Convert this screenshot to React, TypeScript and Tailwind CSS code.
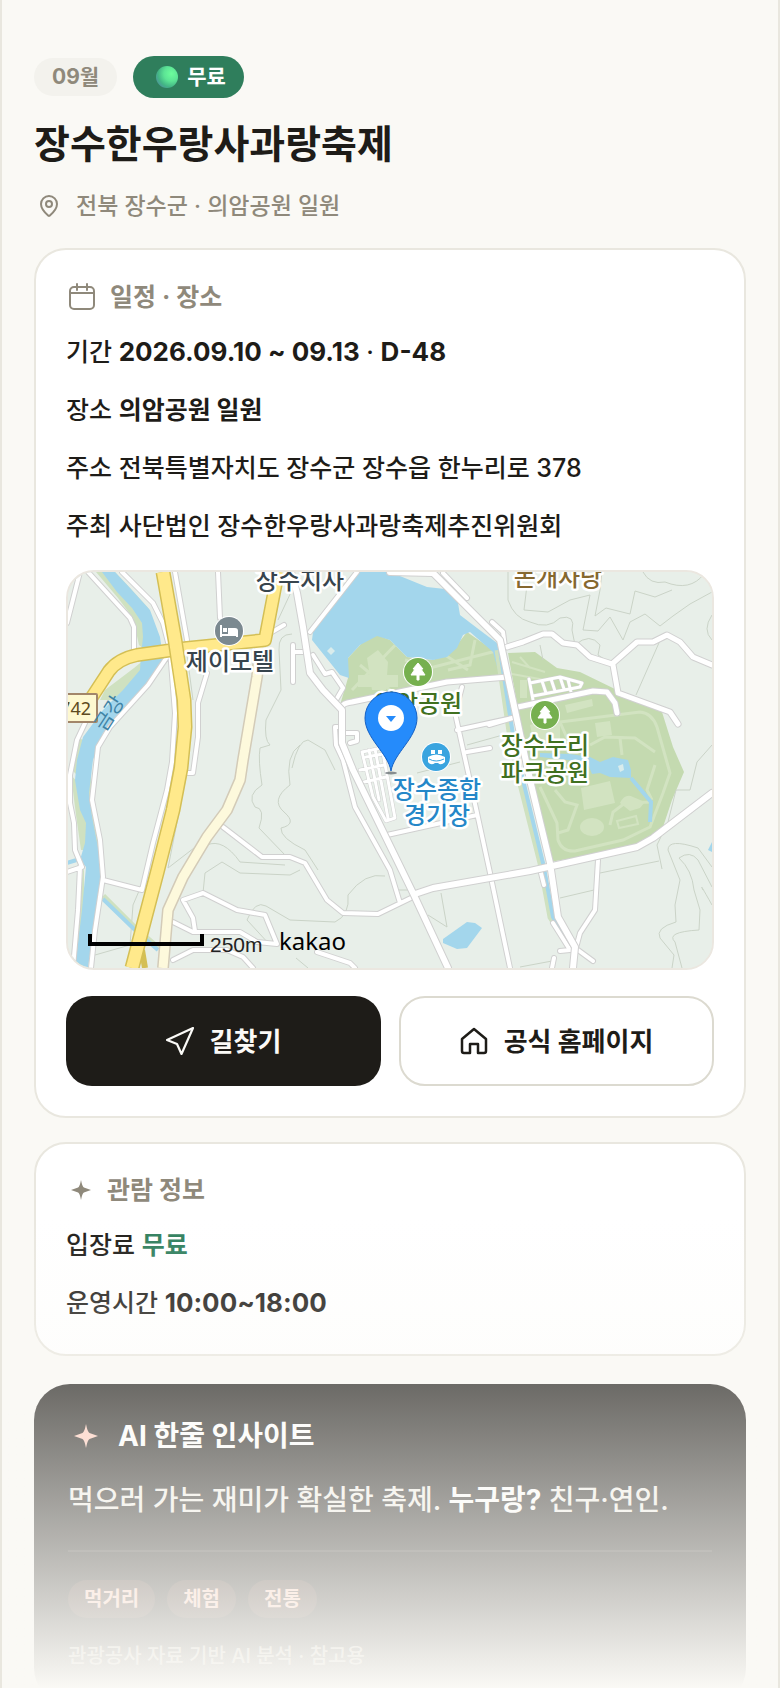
import type { ReactNode } from "react";
import { MapPin } from "lucide-react";

const details = [
  { label: "주소", value: "전북특별자치도 장수군 장수읍 한누리로 378" },
  { label: "주최", value: "사단법인 장수한우랑사과랑축제추진위원회" },
];

const tags = ["먹거리", "체험", "전통"];

// roads are drawn twice: a grey casing first, then the white fill
const smallRoads = [
  "M88 572 L130 618 L134 627 V649",
  "M122 572 L153 603 L163 623 L170 650 L175 713 L172 762 L167 790 L153 843 L142 890 L103 880",
  "M167 657 L148 685 L110 727 L98 747 L92 800 L100 840 L103 877 L95 930 L91 968",
  "M80 572 L67 623",
  "M85 723 L77 740 L70 775 L70 803 L74 823 L75 850 L82 867 L67 872",
  "M80 867 L78 910 L73 968",
  "M175 572 L187 640",
  "M218 572 L220 618",
  "M207 673 L198 703 V737 L193 773 H188",
  "M272 632 L284 625",
  "M293 645 V682",
  "M293 652 H303",
  "M223 827 L262 857 L290 857 L305 863 L327 900 L343 913 L378 914 L415 896",
  "M173 922 L193 932 H240 L257 942 L277 944 L265 915 L237 910 L203 893 L183 900 L193 918 L195 931",
  "M173 960 L193 950 H227 L243 957 L253 968",
  "M317 952 L350 963 L355 968",
  "M357 572 L310 632",
  "M313 655 L325 674 L332 672 L343 688 L336 700",
  "M342 727 L335 727 L336 745 L343 760 L355 807 L390 870 L400 903",
  "M462 687 L455 713 L477 813 L490 873 L510 968",
  "M457 730 L512 718",
  "M467 752 L490 748",
  "M387 835 L477 815",
  "M346 733 H357 V741 L350 743",
  "M443 573 L467 598",
  "M492 622 L503 632 L505 647",
  "M598 860 L595 910 L580 933 L576 948",
  "M578 950 L593 961",
  "M553 923 L570 950 L560 951",
  "M554 958 L552 968",
  "M541 873 L544 885",
  "M489 725 L513 718",
];

const midRoads = [
  "M507 647 L523 642 L543 634 H552 L563 643 L577 645 L590 657 L612 664 L637 642 H653 L667 635 L680 642 L693 657 L712 665",
  "M613 665 L618 693 L670 712 L678 724",
  "M518 707 L593 691 L607 692 L615 703 L617 713",
  "M342 707 Q343 703 352 702 L447 682 L508 677",
];

const bigRoads = [
  "M291 572 L297 593 L303 627 L310 673 L323 690 L342 710 V743 L353 770 L413 893 L448 968",
  "M415 894 L433 888 L530 871 L637 847 L653 838 L712 793",
  "M390 572 L433 573 L470 610 L500 640 L507 673 L530 780 L550 863 L558 917 L575 947 L573 968",
];

const lots = [
  "M362 752 L382 748 L395 818 L386 821 L373 797 Z",
  "M369 750 L379 800 M375 749 L388 818 M360 770 L384 765 M364 782 L386 777 M366 757 L383 754",
  "M529 679 L533 700 M530 683 L560 677 L582 683 L580 687 L533 696 M542 681 L546 693 M551 679 L555 691 M560 677 L564 689 M568 680 L571 692",
];

const contours = [
  "M508 572 L508 600 Q514 618 530 622 Q548 630 560 618 Q576 614 572 630 L575 645 Q590 632 600 645 L598 655 L610 663",
  "M527 585 L524 610 L548 612 L570 600 L590 595 L583 630 L598 631 L610 617 L623 640 L630 622 L645 614 L660 626 L673 616 L690 604 L712 592",
  "M643 572 Q650 585 665 582 Q690 592 704 574",
  "M602 572 L600 590 L595 616 L606 608 L630 614 L635 591 L655 597 L672 590",
  "M662 636 L636 695 M540 645 L543 660 M712 615 Q702 630 712 640",
  "M712 745 L697 762 L690 790 L676 790 L668 822 L657 845 L662 869 M600 873 L659 861",
  "M560 898 L594 890 M520 967 L552 961",
  "M712 867 L698 848 Q668 838 668 850 L680 880 L675 905 L676 922 Q655 928 660 938 L674 955 L672 968",
  "M712 905 Q698 880 703 890 M712 887 L698 860 Q690 850 679 858 Q692 870 694 890 L700 910 L699 930 Q665 932 675 942 L682 968",
  "M292 634 Q278 634 279 650 L281 690 L266 720 Q264 740 270 745 L260 748 Q258 760 262 785 Q246 795 255 807 Q266 808 259 828 L285 855",
  "M300 745 Q285 755 290 785 Q270 800 284 812 Q298 824 281 828 Q280 838 305 850 L318 870",
  "M292 590 L278 620 M185 640 L193 700 M187 772 L168 868 L207 838",
  "M207 845 Q223 838 240 862 L285 865 M203 893 L205 873 L222 862 L240 873 L290 875 L300 870",
  "M270 945 L247 920 Q255 900 266 906 L290 920 L335 922 Q350 915 348 895 Q365 872 385 876",
  "M398 890 L410 890 M441 893 L447 927 L428 915",
  "M292 768 Q298 740 308 740 L325 750 L335 770 M417 773 L460 762 M467 745 L510 733",
  "M139 891 L133 905 L130 945 L95 955 M296 958 L308 968",
];

const parkPaths = [
  "M540 787 L557 823 L558 840 Q562 852 575 851 L623 840 L650 827 L663 793 L670 773 L657 727 Q652 713 640 712 L560 722",
  "M555 790 L565 802 L577 805 L568 830 L558 833 M610 825 L613 812 L625 803 L652 802 M655 765 L647 790 L652 800",
  "M590 745 L605 737 L635 738 L655 752 M620 738 L622 755 M560 722 L570 745",
  "M352 690 L400 640 M375 660 V690 M360 665 L390 690 M405 660 L430 668 L500 650 M475 640 L470 665 L448 670 M445 655 L468 670",
];

const font = "font-['Inter','Noto_Sans_CJK_KR',sans-serif]";

function Tree({ x, y }: { x: number; y: number }) {
  return (
    <g transform={`translate(${x} ${y})`}>
      <circle r="15" fill="#fff" />
      <circle r="14" fill="#76b04f" />
      <path d="M0 -9 L5 -3 H3 L7 3 H1 V8 H-1 V3 H-7 L-3 -3 H-5 Z" fill="#fff" stroke="#fff" strokeLinejoin="round" />
    </g>
  );
}

function Roads({ paths, casing, fill }: { paths: string[]; casing: number; fill: number }) {
  const d = paths.join(" ");
  return (
    <g fill="none" strokeLinejoin="round" strokeLinecap="round">
      <path d={d} stroke="#d0d0d0" strokeWidth={casing} />
      <path d={d} stroke="#fff" strokeWidth={fill} />
    </g>
  );
}

function FestivalMap() {
  return (
    <div className="h-[400px] overflow-hidden rounded-[28px] border-2 border-[#ebe7e0] bg-[#e8efe9]">
      <svg
        viewBox="68 572 644 396"
        preserveAspectRatio="xMidYMid slice"
        className="block h-full w-full"
        role="img"
        aria-label="의암공원 지도"
      >
        <rect x="68" y="572" width="644" height="396" fill="#e8efe9" />

        {/* parks */}
        <g fill="#c4dab0">
          <path d="M340 705 L348 678 L348 658 L362 643 L377 635 L390 640 L407 657 L433 660 L453 650 L467 632 L493 650 L503 677 L447 683 Z" />
          <path d="M508 653 L535 652 L557 668 L580 672 L617 690 L662 712 L673 747 L684 772 L672 800 L663 827 L637 847 L550 862 L523 737 Z" />
        </g>
        <path d="M96 572 L118 598 L133 618 L139 645 L145 650 L152 572 Z M150 655 L134 668 L105 690 L100 700 L125 700 Z M72 770 L77 738 L84 740 L82 780 Z M71 775 L76 815 L81 850 L88 850 L90 822 L80 785 Z M84 865 L78 905 L72 968 H84 Z M90 770 L103 870 L95 870 L88 790 Z" fill="#cfe1c0" />
        <path d="M115 572 L152 572 L170 650 L163 657 L160 637 L150 610 L130 588 Z" fill="#e8efe9" />
        <g fill="none" stroke="#d2e3c1" strokeWidth="3">
          {parkPaths.map((d) => (
            <path key={d} d={d} />
          ))}
        </g>
        <g fill="#d2e3c1">
          <path d="M581 788 L610 781 L615 803 L584 810 Z M367 658 L378 650 L388 662 L386 690 H372 Z M358 675 H398 V687 H358 Z M520 680 H527 V698 H520 Z M595 723 L610 721 L612 735 L597 737 Z M565 705 L592 699 L593 706 L567 713 Z M530 725 L560 715 V745 L535 748 Z" />
          <ellipse cx="592" cy="827" rx="12" ry="9" />
          <path d="M620 803 Q625 793 633 797 L645 802 L640 808 L630 811 Z" />
        </g>
        <path d="M617 821 L636 816 L638 824 L619 828 Z M512 662 L545 672 M512 674 L545 680 M520 657 L530 668" fill="none" stroke="#d2e3c1" strokeWidth="2" />

        <g fill="none" stroke="#cad3c7" strokeWidth="1">
          {contours.map((d) => (
            <path key={d} d={d} />
          ))}
        </g>

        {/* water */}
        <g fill="#a3d6ec">
          <path d="M102 572 L117 592 L132 608 L142 623 L143 637 L141 655 L140 670 L123 690 L103 710 L83 737 L77 760 L75 780 L80 810 L86 823 L85 843 L80 860 L86 867 L82 910 L75 968 H88 L93 933 L99 907 L101 880 L99 853 L92 817 L89 793 L93 760 L103 733 L140 692 L160 667 L163 657 L160 637 L150 610 L130 588 L115 572 Z" />
          <path d="M357 572 H390 L427 587 L445 589 L458 603 L460 615 L477 628 L497 643 L505 677 L500 677 L493 652 L470 632 L463 635 L457 648 L447 657 L433 660 L407 657 L390 640 L377 636 L360 645 L348 658 L349 678 L340 675 L312 640 L313 632 Z" />
          <path d="M467 922 L475 923 L482 928 L467 948 L457 949 L443 943 V939 Z" />
          <path d="M540 753 L570 754 L590 757 L600 762 L613 757 L628 760 L631 770 L631 778 L610 777 L600 773 L592 774 L587 762 L540 757 Z" />
          <path d="M712 842 L708 850 L712 852 Z" />
        </g>
        <path d="M331 647 L335 651 L331 655 L327 651 Z M618 766 L623 764 L624 770 L620 772 Z" fill="#d9ecec" />
        <g fill="none">
          <path d="M103 896 L135 928 L158 948" stroke="#cfe1c0" strokeWidth="6" />
          <path d="M498 650 L504 690 L512 745 L520 780 L541 863 L551 917 L570 947" stroke="#cfe1c0" strokeWidth="7" />
          <path d="M103 899 L135 930 L158 950 M67 863 L80 859 M631 778 L651 802 L650 822 M500 650 L506 690 L515 747 L523 780 L543 863 L553 917 L572 947" stroke="#a3d6ec" strokeWidth="4" />
        </g>

        <Roads paths={smallRoads} casing={6} fill={4} />
        <Roads paths={lots} casing={4} fill={3} />
        <Roads paths={midRoads} casing={7} fill={5} />
        <Roads paths={bigRoads} casing={8} fill={6} />

        {/* highways */}
        <g fill="none" strokeLinejoin="round">
          <path d="M260 647 L257 677 L243 760 L240 780 L227 810 L207 837 L183 877 L168 910 L163 968" stroke="#d3cbb8" strokeWidth="12" />
          <path d="M260 647 L257 677 L243 760 L240 780 L227 810 L207 837 L183 877 L168 910 L163 968" stroke="#fdf9dc" strokeWidth="9" />
          <path d="M278 572 L265 640 L187 648 L137 655 Q118 659 109 671 L92 697 L80 712" stroke="#d4bf55" strokeWidth="14" />
          <path d="M278 572 L265 640 L187 648 L137 655 Q118 659 109 671 L92 697 L80 712" stroke="#ffe98b" strokeWidth="11" />
          <path d="M142 950 L145 968" stroke="#d4bf55" strokeWidth="6" />
          <path d="M163 572 L175 640 L184 700 L185 727 L181 768 L173 810 L157 873 L142 930 L132 968" stroke="#d4bf55" strokeWidth="15" />
          <path d="M163 572 L175 640 L184 700 L185 727 L181 768 L173 810 L157 873 L142 930 L132 968" stroke="#ffe98b" strokeWidth="12" />
        </g>

        <rect x="50" y="694" width="47" height="28" rx="1" fill="#fdf8d0" stroke="#a2866a" strokeWidth="2" />
        <text x="91" y="715" textAnchor="end" fontSize="18" fill="#5c4a20" className="font-['Noto_Sans',sans-serif]">742</text>

        {/* place labels */}
        <g
          textAnchor="middle"
          fontSize="24"
          stroke="#fff"
          strokeWidth="5"
          strokeLinejoin="round"
          paintOrder="stroke"
          className="font-['Noto_Sans_CJK_KR',sans-serif] font-medium"
        >
          <text x="300" y="589" fill="#37444d">장수지사</text>
          <text x="230" y="670" fill="#37444d">제이모텔</text>
          <text x="558" y="586" fill="#86682f">논개사당</text>
          <text x="418" y="712" fill="#40701f">의암공원</text>
          <text x="545" y="754" fill="#40701f">장수누리</text>
          <text x="545" y="781" fill="#40701f">파크공원</text>
          <text x="437" y="798" fill="#2587c8">장수종합</text>
          <text x="437" y="824" fill="#2587c8">경기장</text>
        </g>
        <text transform="translate(115 717) rotate(-57)" textAnchor="middle" fontSize="20" fill="#3f83a5" className="font-['Noto_Sans_CJK_KR',sans-serif]">금강</text>

        {/* place icons */}
        <circle cx="229" cy="631" r="15" fill="#fff" />
        <circle cx="229" cy="631" r="14" fill="#7b8990" />
        <path d="M221 625 V637 M221 635 H237 V637" fill="none" stroke="#fff" strokeWidth="2" />
        <path d="M228 628 H235 Q238 628 238 631 V635 H228 Z M223 628 H227 V632 H223 Z" fill="#fff" />
        <Tree x={418} y={672} />
        <Tree x={545} y={715} />
        <circle cx="436" cy="757" r="15" fill="#fff" />
        <circle cx="436" cy="757" r="14" fill="#3aa4df" />
        <path d="M428 757 Q436 752 445 757 V762 Q441 766 438 763 H435 Q431 766 428 762 Z M431 750 H435 V754 H431 Z M438 750 H442 V754 H438 Z" fill="#fff" />
        <path d="M429 759 Q436 763 444 759" fill="none" stroke="#3aa4df" />

        {/* marker */}
        <ellipse cx="391" cy="773" rx="6" ry="1.500" fill="#5b6468" opacity="0.7" />
        <path d="M391 771 C388 753 365 738 365 718 A26 26 0 0 1 417 718 C417 738 394 753 391 771 Z" fill="#258bfb" stroke="#1561c4" />
        <circle cx="391" cy="718" r="13" fill="#fff" />
        <path d="M386 716 H396 L391 722 Z" fill="#258bfb" />

        {/* scale */}
        <path d="M90 934 V944 H202 V934" fill="none" stroke="#000" strokeWidth="4" />
        <text x="210" y="952" fontSize="21" fill="#222" className="font-['Liberation_Sans',sans-serif]">250m</text>
        <text x="279" y="950" fontSize="24" fill="#000" className="font-['Noto_Sans',sans-serif]">kakao</text>
      </svg>
    </div>
  );
}

function Sparkle({ className }: { className: string }) {
  return (
    <svg viewBox="0 0 24 24" fill="currentColor" className={className} aria-hidden="true">
      <path d="M12 0 Q13.500 8 15.500 9 L24 12 L15.500 15 Q13.500 16 12 24 Q10.500 16 8.500 15 L0 12 L8.500 9 Q10.500 8 12 0 Z" />
    </svg>
  );
}

function CardTitle({ icon, children }: { icon: ReactNode; children: ReactNode }) {
  return (
    <h2 className="flex h-8 items-center text-[25px] leading-8 font-bold text-[#8f897b]">
      {icon}
      {children}
    </h2>
  );
}

function Row({ label, children }: { label: string; children: ReactNode }) {
  return (
    <p className="h-[42px] text-[25px] leading-[42px] font-medium">
      {label} {children}
    </p>
  );
}

export default function App() {
  return (
    <div className={`relative h-screen overflow-hidden border-x-2 border-[#e9e7df] bg-[#faf9f5] text-[#1e1c18] ${font}`}>
      <main className="px-8 pt-14">
        <div className="flex items-center gap-4">
          <span className="flex h-[38px] items-center rounded-full bg-[#f3f2ed] px-[18px] text-[21px] font-bold text-[#8f897b]">09월</span>
          <span className="flex h-[42px] items-center gap-2 rounded-full bg-[#2f7e5c] pr-[18px] pl-[22px] text-[21px] font-bold text-white">
            <svg viewBox="0 0 24 24" className="h-6 w-6" aria-hidden="true">
              <defs>
                <radialGradient id="ball" cx="0.7" cy="0.35" r="0.75">
                  <stop offset="0" stopColor="#6dfd9c" />
                  <stop offset="0.45" stopColor="#5ce495" />
                  <stop offset="0.8" stopColor="#43b585" />
                  <stop offset="1" stopColor="#4c9b97" />
                </radialGradient>
              </defs>
              <circle cx="12" cy="12" r="11" fill="url(#ball)" />
            </svg>
            무료
          </span>
        </div>

        <h1 className="mt-5 text-[39px] leading-[52px] font-bold">장수한우랑사과랑축제</h1>
        <p className="mt-5 flex items-center gap-[15px] text-[23px] leading-8 font-medium text-[#8f897b]">
          <MapPin className="ml-[3px] h-6 w-6" />
          전북 장수군 · 의암공원 일원
        </p>

        <section className="mt-[26px] rounded-[32px] border-2 border-[#e9e7df] bg-white px-[30px] pt-[31px] pb-[30px]">
          <CardTitle
            icon={
              <svg viewBox="0 0 28 28" fill="none" stroke="currentColor" strokeWidth="2" strokeLinecap="round" className="mr-[14px] ml-[2px] h-7 w-7" aria-hidden="true">
                <rect x="2" y="4" width="24" height="22" rx="4" />
                <path d="M2 10 H26 M9 1 V7 M19 1 V7" />
              </svg>
            }
          >
            일정 · 장소
          </CardTitle>
          <div className="mt-[18px] space-y-4">
            <Row label="기간">
              <strong className="text-[26px]">2026.09.10 ~ 09.13</strong> · <strong className="text-[26px]">D-48</strong>
            </Row>
            <Row label="장소">
              <strong>의암공원 일원</strong>
            </Row>
            {details.map((item) => (
              <Row key={item.label} label={item.label}>
                {item.value}
              </Row>
            ))}
          </div>
          <div className="mt-[23px]">
            <FestivalMap />
          </div>
          <div className="mt-[26px] grid grid-cols-2 gap-[18px]">
            <button type="button" className="flex h-[90px] items-center justify-center gap-4 rounded-[26px] bg-[#1e1c18] text-[26px] font-bold text-[#fbfaf7]">
              <svg viewBox="0 0 28 28" fill="none" stroke="currentColor" strokeWidth="2.200" strokeLinejoin="round" className="h-7 w-7" aria-hidden="true">
                <path d="M27 1 L1 13 L11 17 L15.500 27 Z" />
              </svg>
              길찾기
            </button>
            <a href="#home" className="flex h-[90px] items-center justify-center gap-4 rounded-[26px] border-2 border-[#dcdad0] bg-white text-[26px] font-bold">
              <svg viewBox="0 0 28 28" fill="none" stroke="currentColor" strokeWidth="2.500" strokeLinejoin="round" className="h-7 w-7" aria-hidden="true">
                <path d="M2 12 L14 2 L26 12 V24 Q26 26 24 26 H18 V17 H10 V26 H4 Q2 26 2 24 Z" />
              </svg>
              공식 홈페이지
            </a>
          </div>
        </section>

        <section className="mt-6 rounded-[32px] border-2 border-[#e9e7df] bg-white px-[30px] pt-[30px] pb-[30px]">
          <CardTitle icon={<Sparkle className="mr-[16px] ml-[5px] h-5 w-5" />}>관람 정보</CardTitle>
          <div className="mt-[18px] space-y-4">
            <Row label="입장료">
              <strong className="text-[#2f7e5c]">무료</strong>
            </Row>
            <Row label="운영시간">
              <strong className="text-[26px]">10:00~18:00</strong>
            </Row>
          </div>
        </section>

        <section className="mt-7 rounded-[36px] bg-[#1e1c18] px-[34px] py-8 text-[#f1efe8]">
          <h2 className="flex items-center text-[28px] leading-10 font-bold text-white">
            <Sparkle className="mr-[20px] ml-[6px] h-6 w-6 text-[#ffc9b8]" />
            AI 한줄 인사이트
          </h2>
          <p className="mt-[22px] text-[28px] leading-[44px] font-medium">
            먹으러 가는 재미가 확실한 축제. <strong className="text-white">누구랑?</strong> 친구·연인.
          </p>
          <hr className="mt-7 border-t-2 border-white/10" />
          <ul className="mt-7 flex gap-3">
            {tags.map((tag) => (
              <li key={tag} className="flex h-[38px] items-center rounded-full bg-[#ff9d80]/15 px-4 text-[20px] font-bold text-[#ffc9b8]">
                {tag}
              </li>
            ))}
          </ul>
          <p className="mt-[22px] text-[20px] leading-8 font-medium text-[#b5b1a6]">관광공사 자료 기반 AI 분석 · 참고용</p>
        </section>
      </main>

      {/* fade over the rest of the page */}
      <div className="pointer-events-none absolute inset-x-0 bottom-0 h-[470px] bg-linear-to-b from-[#faf9f5]/0 to-[#faf9f5]" />
    </div>
  );
}
